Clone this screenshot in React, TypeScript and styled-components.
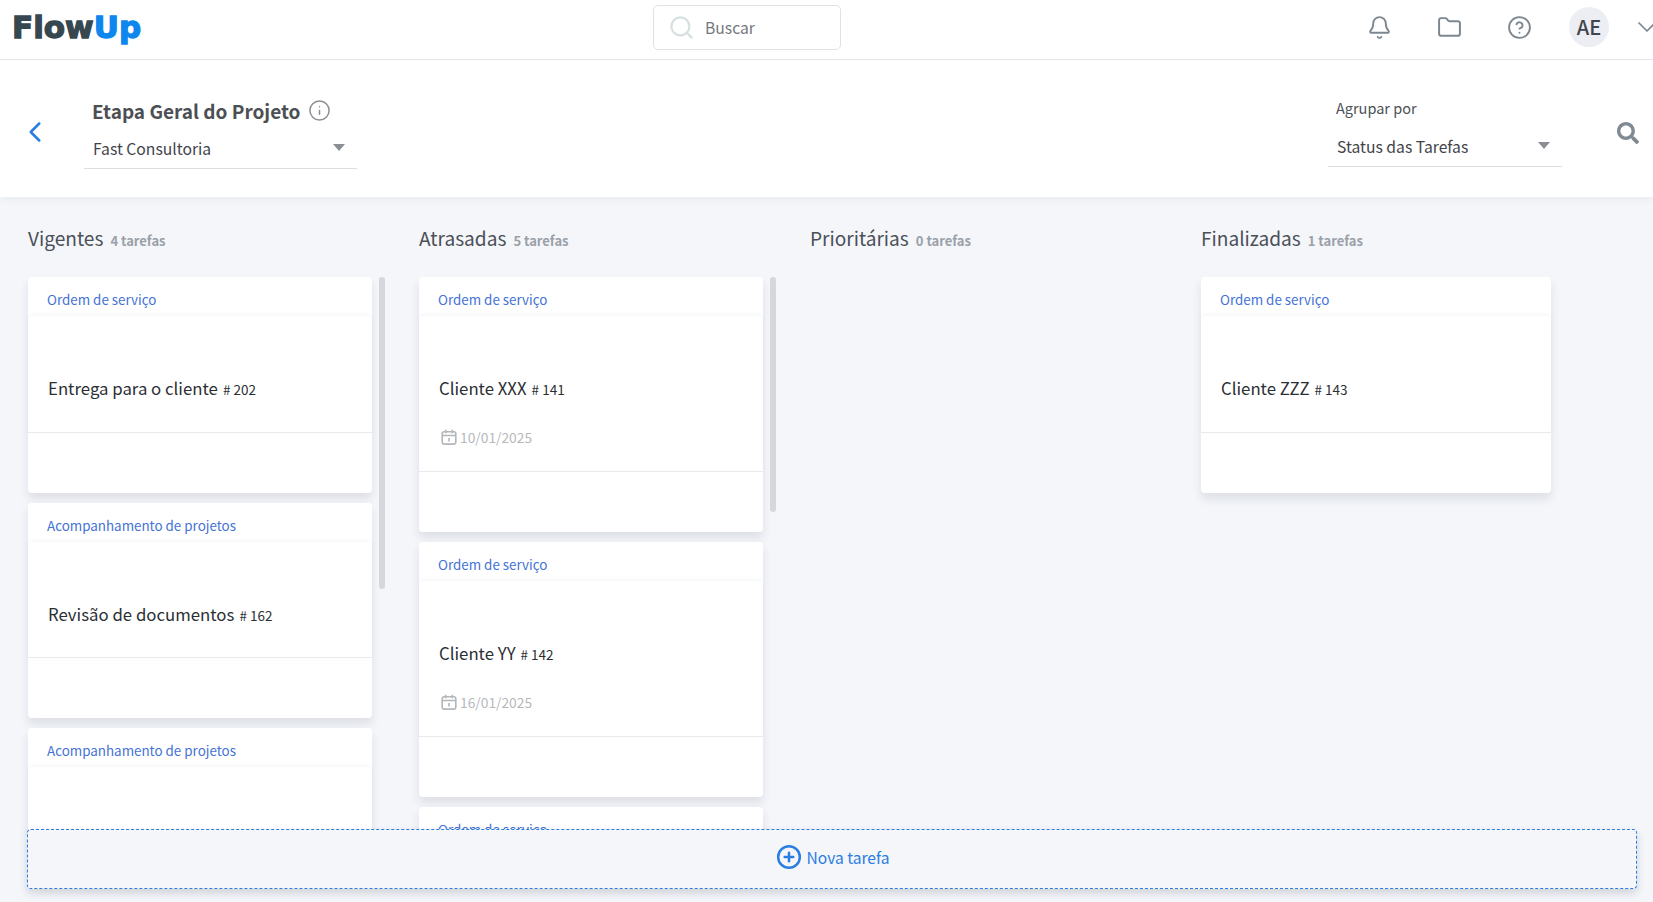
import React from "react";
import styled, { createGlobalStyle } from "styled-components";
import { Bell, Folder, CircleHelp, ChevronDown, ChevronLeft, Info, Search, CirclePlus } from "lucide-react";
import { FaSearch } from "react-icons/fa";

const Global = createGlobalStyle`
  html, body { margin: 0; padding: 0; height: 100%; overflow: hidden; background: #f4f6fa; }
  body { font-family: "Noto Sans CJK SC", "Noto Sans", sans-serif; color: #3c4148; }
  * { box-sizing: border-box; }
`;

const Page = styled.div`
  height: 902px;
  display: flex;
  flex-direction: column;
  overflow: hidden;
`;

const TopBar = styled.header`
  height: 60px;
  flex: none;
  background: #fff;
  border-bottom: 1px solid #e6e8ea;
  display: grid;
  grid-template-columns: 641px 188px 1fr;
  padding-left: 12px;
  align-items: center;
`;

const Logo = styled.div`
  font-family: "DejaVu Sans", sans-serif;
  font-weight: 700;
  font-size: 31px;
  line-height: 1;
  letter-spacing: 0;
  color: #37474f;
  -webkit-text-stroke: 1.3px currentColor;
  margin-top: -4px;
`;

const LogoAccent = styled.span`
  color: #0d86ee;
`;

const SearchBox = styled.div`
  height: 45px;
  width: 188px;
  border: 1px solid #dfe2e4;
  border-radius: 5px;
  display: flex;
  align-items: center;
  padding: 1px 0 0 14px;
  gap: 10px;
  font-size: 15.7px;
  color: #75797e;
  margin-top: -5px;
`;

const TopActions = styled.div`
  display: flex;
  align-items: center;
  justify-content: flex-end;
  margin-top: -5px;
  overflow: hidden;
`;

const IconSlot = styled.span`
  width: 70px;
  display: flex;
  justify-content: center;
  color: #7d8790;
`;

const Avatar = styled.div`
  width: 40px;
  height: 40px;
  border-radius: 50%;
  background: #eceef3;
  color: #3f464d;
  font-size: 20px;
  font-weight: 500;
  display: flex;
  align-items: center;
  justify-content: center;
  padding-bottom: 2px;
  margin: 0 30px 0 15px;
  flex: none;
`;

const Caret = styled.span`
  color: #7d8790;
  width: 14px;
  display: flex;
  flex: none;
`;

const SubBar = styled.section`
  height: 137px;
  flex: none;
  background: #fff;
  display: flex;
  align-items: flex-start;
  padding-left: 18px;
  position: relative;
  z-index: 2;
  box-shadow: 0 3px 7px rgba(40, 50, 70, 0.05);
`;

const BackButton = styled.span`
  color: #2a7de1;
  display: flex;
  margin-top: 55px;
  width: 66px;
  flex: none;
`;

const TitleGroup = styled.div`
  display: flex;
  flex-direction: column;
  width: 273px;
  padding-top: 35px;
`;

const TitleRow = styled.div`
  display: flex;
  align-items: center;
  gap: 7px;
  padding-left: 8px;
  height: 30px;
  color: #8b8f94;
`;

const Title = styled.h1`
  margin: 0;
  font-size: 19px;
  font-weight: 700;
  color: #4c4f53;
`;

const SelectField = styled.div`
  height: 44px;
  border-bottom: 1px solid #dcdee0;
  display: flex;
  align-items: center;
  justify-content: space-between;
  padding: 3px 12px 0 9px;
  font-size: 15.7px;
  color: #3f444a;
`;

const Triangle = styled.span`
  width: 0;
  height: 0;
  border-left: 6px solid transparent;
  border-right: 6px solid transparent;
  border-top: 7px solid #8b8f94;
  margin-top: -1px;
`;

const Spacer = styled.div`
  flex: 1;
`;

const GroupBy = styled.div`
  width: 234px;
  padding-top: 33px;
  display: flex;
  flex-direction: column;
`;

const GroupLabel = styled.label`
  font-size: 14.5px;
  line-height: 30px;
  color: #4c5157;
  padding-left: 8px;
`;

const SearchAction = styled.span`
  color: #808a93;
  display: flex;
  margin: 62px 14px 0 55px;
`;

const Board = styled.main`
  flex: 1;
  min-height: 0;
  position: relative;
  display: flex;
  padding-left: 28px;
  overflow: hidden;
`;

const Column = styled.section`
  width: 391px;
  flex: none;
  position: relative;
  display: flex;
  flex-direction: column;
  padding: 27px 0 67px;
`;

const ColumnHead = styled.div`
  display: flex;
  flex: none;
  align-items: baseline;
  gap: 7px;
  height: 53px;
`;

const ColumnName = styled.h2`
  margin: 0;
  font-size: 19.1px;
  line-height: 28px;
  font-weight: 400;
  color: #4b5058;
`;

const ColumnCount = styled.span`
  font-size: 13px;
  font-weight: 600;
  color: #9aa0a8;
`;

const Cards = styled.div`
  flex: 1;
  min-height: 0;
  overflow: hidden;
  display: flex;
  flex-direction: column;
  gap: 10px;
  margin: 0 -14px;
  padding: 0 14px;
`;

const Card = styled.article<{ $wide?: boolean }>`
  width: ${(p) => (p.$wide ? 350 : 344)}px;
  flex: none;
  background: #fff;
  border-radius: 4px;
  box-shadow: 0 6px 10px rgba(40, 45, 60, 0.11);
`;

const CardType = styled.div`
  height: 39px;
  padding: 4px 19px 0;
  display: flex;
  align-items: center;
  font-size: 13.4px;
  color: #4472d6;
`;

const CardBody = styled.div<{ $height: number }>`
  height: ${(p) => p.$height}px;
  border-radius: 4px 4px 0 0;
  box-shadow: 0 -2px 3px rgba(40, 45, 60, 0.035);
  border-bottom: 1px solid #e8e9ec;
  padding: 57px 20px 0;
`;

const CardTitle = styled.div`
  font-size: 16.8px;
  line-height: 30px;
  color: #2b2f34;
`;

const CardNumber = styled.span`
  font-size: 13.5px;
  margin-left: 5px;
`;

const CardDate = styled.div`
  display: flex;
  align-items: center;
  gap: 3px;
  margin-top: 23px;
  padding-left: 2px;
  font-size: 13.8px;
  line-height: 20px;
  color: #b7b9bc;
`;

const CardFooter = styled.div<{ $height: number }>`
  height: ${(p) => p.$height}px;
`;

const Thumb = styled.span<{ $height: number }>`
  position: absolute;
  left: 351px;
  top: 80px;
  width: 6px;
  height: ${(p) => p.$height}px;
  border-radius: 3px;
  background: #d6d7da;
`;

const NewTask = styled.button`
  position: absolute;
  left: 27px;
  top: 632px;
  width: 1610px;
  height: 60px;
  border: 1px dashed #2a7de1;
  border-radius: 4px;
  background: #f4f6fa;
  box-shadow: 0 4px 8px rgba(40, 45, 60, 0.18);
  color: #2a7de1;
  font: inherit;
  font-size: 15.6px;
  display: flex;
  align-items: center;
  justify-content: center;
  gap: 4px;
  padding: 0 0 4px 2px;
`;

const CalendarIcon = () => (
  <svg width="16" height="16" viewBox="0 0 16 16" fill="none" stroke="#b4b6b9" strokeWidth="1.6">
    <rect x="1.2" y="2.7" width="13.6" height="12.4" rx="2" />
    <path d="M1.2 6.5h13.6M4.7 .8v3.4M11.3 .8v3.4M8 9v3.6" />
  </svg>
);

type Task = { id: number; type: string; title?: string; date?: string; body: number; foot: number };

const columns: { name: string; count: number; thumb?: number; wide?: boolean; tasks: Task[] }[] = [
  {
    name: "Vigentes",
    count: 4,
    thumb: 312,
    tasks: [
      { id: 202, type: "Ordem de serviço", title: "Entrega para o cliente", body: 117, foot: 60 },
      { id: 162, type: "Acompanhamento de projetos", title: "Revisão de documentos", body: 116, foot: 60 },
      { id: 1, type: "Acompanhamento de projetos", body: 116, foot: 60 },
    ],
  },
  {
    name: "Atrasadas",
    count: 5,
    thumb: 235,
    tasks: [
      { id: 141, type: "Ordem de serviço", title: "Cliente XXX", date: "10/01/2025", body: 156, foot: 60 },
      { id: 142, type: "Ordem de serviço", title: "Cliente YY", date: "16/01/2025", body: 156, foot: 60 },
      { id: 2, type: "Ordem de serviço", body: 116, foot: 60 },
    ],
  },
  { name: "Prioritárias", count: 0, tasks: [] },
  {
    name: "Finalizadas",
    count: 1,
    wide: true,
    tasks: [{ id: 143, type: "Ordem de serviço", title: "Cliente ZZZ", body: 117, foot: 60 }],
  },
];

export default function App() {
  return (
    <Page>
      <Global />
      <TopBar>
        <Logo>
          Flow<LogoAccent>Up</LogoAccent>
        </Logo>
        <SearchBox>
          <Search size={27} color="#d6e0e1" strokeWidth={2} />
          Buscar
        </SearchBox>
        <TopActions>
          <IconSlot><Bell size={25} strokeWidth={1.8} /></IconSlot>
          <IconSlot><Folder size={25} strokeWidth={1.9} /></IconSlot>
          <IconSlot><CircleHelp size={25} strokeWidth={1.8} /></IconSlot>
          <Avatar>AE</Avatar>
          <Caret><ChevronDown size={32} strokeWidth={1.3} style={{ flex: "none", marginLeft: -8 }} /></Caret>
        </TopActions>
      </TopBar>
      <SubBar>
        <BackButton><ChevronLeft size={34} strokeWidth={1.8} /></BackButton>
        <TitleGroup>
          <TitleRow>
            <Title>Etapa Geral do Projeto</Title>
            <Info size={23} strokeWidth={1.6} />
          </TitleRow>
          <SelectField>
            Fast Consultoria
            <Triangle />
          </SelectField>
        </TitleGroup>
        <Spacer />
        <GroupBy>
          <GroupLabel>Agrupar por</GroupLabel>
          <SelectField>
            Status das Tarefas
            <Triangle />
          </SelectField>
        </GroupBy>
        <SearchAction><FaSearch size={22} /></SearchAction>
      </SubBar>
      <Board>
        {columns.map((c) => (
          <Column key={c.name}>
            <ColumnHead>
              <ColumnName>{c.name}</ColumnName>
              <ColumnCount>{c.count} tarefas</ColumnCount>
            </ColumnHead>
            <Cards>
              {c.tasks.map((t) => (
                <Card key={t.id} $wide={c.wide}>
                  <CardType>{t.type}</CardType>
                  <CardBody $height={t.body}>
                    {t.title && (
                      <CardTitle>
                        {t.title}
                        <CardNumber># {t.id}</CardNumber>
                      </CardTitle>
                    )}
                    {t.date && (
                      <CardDate>
                        <CalendarIcon />
                        {t.date}
                      </CardDate>
                    )}
                  </CardBody>
                  <CardFooter $height={t.foot} />
                </Card>
              ))}
            </Cards>
            {c.thumb && <Thumb $height={c.thumb} />}
          </Column>
        ))}
        <NewTask>
          <CirclePlus size={26} strokeWidth={2.3} />
          Nova tarefa
        </NewTask>
      </Board>
    </Page>
  );
}
